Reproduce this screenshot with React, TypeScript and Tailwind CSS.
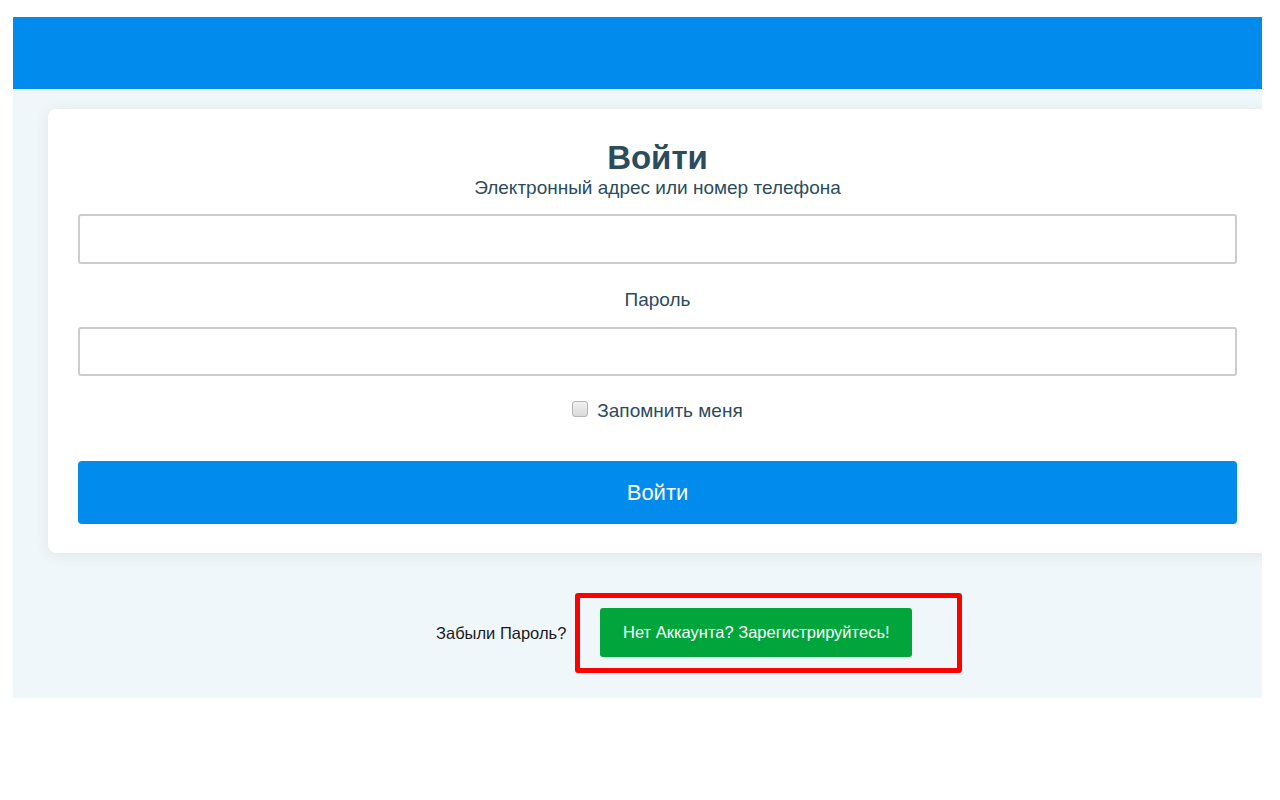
import React from 'react';

export default function App() {
  return (
    <div className="min-h-[800px] bg-white pt-[17px] pl-[13px]" style={{ fontFamily: '"Liberation Sans", Arial, sans-serif' }}>
      <div className="w-[1249px]">
        {/* HEADER */}
        <div className="h-[72px] bg-[#008bed]" />

        {/* MAIN */}
        <div className="h-[609px] overflow-hidden bg-[#f0f7fa] pt-[20px] pl-[35px]">
          <div className="w-[1219px] h-[444px] rounded-lg bg-white px-[30px] pt-[31px] shadow-[0_2px_14px_rgba(40,80,100,0.10)]">
            <h1 className="text-center text-[33px] leading-[36px] font-bold text-[#2b4c5b]">Войти</h1>
            <label className="mt-[1px] block text-center text-[19px] leading-[22px] text-[#2b4c5b]">
              Электронный адрес или номер телефона
            </label>
            <input
              type="text"
              className="mt-[15px] block h-[50px] w-full rounded-[3px] border-2 border-[#cccccc] bg-white px-3 outline-none"
            />
            <label className="mt-[25px] block text-center text-[19px] leading-[22px] text-[#2b4c5b]">Пароль</label>
            <input
              type="password"
              className="mt-[16px] block h-[49px] w-full rounded-[3px] border-2 border-[#cccccc] bg-white px-3 outline-none"
            />
            <div className="mt-[24px] flex h-[22px] items-center justify-center gap-[9px]">
              <span className="h-[16px] w-[16px] -translate-y-[2px] rounded-[3px] border border-[#b5b5b5] bg-gradient-to-b from-[#f2f2f2] to-[#d9d9d9]" />
              <span className="text-[19px] leading-[22px] text-[#2b4c5b]">Запомнить меня</span>
            </div>
            <button className="mt-[39px] flex h-[63px] w-full items-center justify-center rounded-[4px] bg-[#008bed] text-[22px] text-white">
              Войти
            </button>
          </div>

          {/* FOOTER LINKS */}
          <div className="ml-[388px] mt-[40px] flex items-center">
            <span className="text-[16.5px] text-[#1a1a1a]">Забыли Пароль?</span>
            <div className="ml-[9px] h-[80px] w-[387px] rounded-[3px] border-[5px] border-[#ff0000] pl-[20px] pt-[10px]">
              <button className="flex h-[49px] w-[312px] items-center justify-center rounded-[3px] bg-[#00a63c] text-[16.5px] text-white">
                Нет Аккаунта? Зарегистрируйтесь!
              </button>
            </div>
          </div>
        </div>
      </div>
    </div>
  );
}
